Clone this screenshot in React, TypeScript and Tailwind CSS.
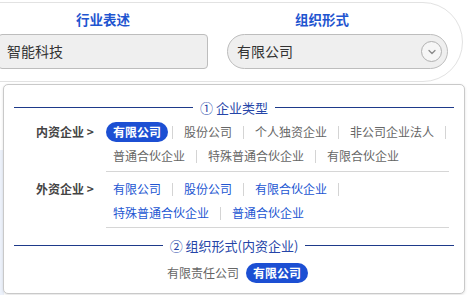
import React from "react";

const FONT = { fontFamily: '"Noto Sans CJK SC", "Noto Sans", sans-serif' };

function Sep() {
  return <span className="mx-[4px] inline-block h-[13px] w-px shrink-0 bg-[#d4d4d4]" />;
}

function Opt({ text, active, blue }: { text: string; active?: boolean; blue?: boolean }) {
  if (active) {
    return (
      <span className="inline-flex h-[20px] shrink-0 items-center whitespace-nowrap rounded-full bg-[#1c4fd3] px-[7px] text-[12px] font-bold leading-none text-white">
        {text}
      </span>
    );
  }
  return (
    <span className={`inline-flex h-[20px] shrink-0 items-center whitespace-nowrap px-[7px] text-[12px] leading-none ${blue ? "text-[#2356d2]" : "text-[#666]"}`}>
      {text}
    </span>
  );
}

function Line({ items, active, blue, trailing }: { items: string[]; active?: string; blue?: boolean; trailing?: boolean }) {
  return (
    <div className="flex h-[24px] items-center whitespace-nowrap">
      {items.map((t, i) => (
        <React.Fragment key={t}>
          <Opt text={t} active={t === active} blue={blue} />
          {(i < items.length - 1 || trailing) && <Sep />}
        </React.Fragment>
      ))}
    </div>
  );
}

function Header({ text }: { text: string }) {
  return (
    <div className="flex h-[20px] items-center px-[10px]">
      <div className="h-px flex-1 bg-[#1e3a8a]" />
      <span className="mx-[7px] whitespace-nowrap text-[13px] leading-none text-[#2545a8]">{text}</span>
      <div className="h-px flex-1 bg-[#1e3a8a]" />
    </div>
  );
}

export default function App() {
  return (
    <div className="relative h-[295px] w-[474px] overflow-hidden bg-white" style={FONT}>
      <div className="absolute left-0 top-[150px] h-[145px] w-[4px] bg-[#edf2fb]" />
      {/* main card */}
      <div className="ml-[-40px] mt-[2px] h-[80px] w-[503px] rounded-r-[40px] border border-[#e2e2e2] bg-white pt-[6px]">
        <div className="flex pl-[37px]">
          <div className="w-[210px]">
            <div className="h-[20px] text-center text-[13.5px] font-bold leading-[20px] text-[#1f55d0]">行业表述</div>
            <div className="mt-[5px] flex h-[35px] items-center rounded-[4px] border border-[#bdbdbd] bg-[#efefef] pl-[8px] text-[14px] text-[#333]">
              智能科技
            </div>
          </div>
          <div className="ml-[19px] w-[221px]">
            <div className="h-[20px] pr-[31px] text-center text-[13.5px] font-bold leading-[20px] text-[#1f55d0]">组织形式</div>
            <div className="mt-[5px] flex h-[35px] items-center justify-between rounded-full border border-[#bdbdbd] bg-[#efefef] pl-[9px] pr-[5px] text-[14px] text-[#333]">
              <span>有限公司</span>
              <span className="flex h-[21px] w-[21px] items-center justify-center rounded-full border border-[#b0b0b0] bg-[#f6f6f6]">
                <svg width="10" height="10" viewBox="0 0 10 10" fill="none">
                  <path d="M2 3.5 L5 6.5 L8 3.5" stroke="#8a8a8a" strokeWidth="1.3" strokeLinecap="round" strokeLinejoin="round" />
                </svg>
              </span>
            </div>
          </div>
        </div>
      </div>

      {/* dropdown popup */}
      <div className="absolute left-[3px] top-[84px] h-[210px] w-[462px] rounded-[5px] border border-[#c9c9c9] bg-white shadow-[0_1px_3px_rgba(0,0,0,0.12)]">
        <div className="pt-[12px]">
          <Header text="① 企业类型" />
        </div>
        <div className="mt-[3px] flex">
          <div className="ml-[32px] flex h-[24px] w-[70px] shrink-0 items-center whitespace-nowrap text-[12px] font-bold text-[#444]">内资企业 &gt;</div>
          <div className="w-[343px] shrink-0">
            <Line items={["有限公司", "股份公司", "个人独资企业", "非公司企业法人"]} active="有限公司" trailing />
            <Line items={["普通合伙企业", "特殊普通合伙企业", "有限合伙企业"]} />
            <div className="mt-[3px] h-px bg-[#d6d6d6]" />
          </div>
        </div>
        <div className="mt-[5px] flex">
          <div className="ml-[32px] flex h-[24px] w-[70px] shrink-0 items-center whitespace-nowrap text-[12px] font-bold text-[#444]">外资企业 &gt;</div>
          <div className="w-[343px] shrink-0">
            <Line items={["有限公司", "股份公司", "有限合伙企业"]} blue trailing />
            <Line items={["特殊普通合伙企业", "普通合伙企业"]} blue />
            <div className="mt-[2px] h-px bg-[#d6d6d6]" />
          </div>
        </div>
        <div className="mt-[7px]">
          <Header text="② 组织形式(内资企业)" />
        </div>
        <div className="mt-[6px] flex h-[24px] items-center justify-center">
          <Opt text="有限责任公司" />
          <Opt text="有限公司" active />
        </div>
      </div>
    </div>
  );
}
